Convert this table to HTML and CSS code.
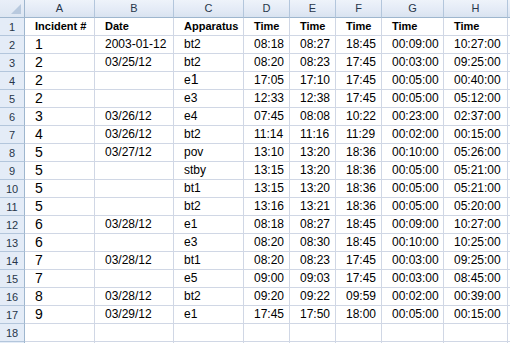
FILE: index.html
```html
<!DOCTYPE html>
<html>
<head>
<meta charset="utf-8">
<link rel="stylesheet" href="styles.css">
</head>
<body>
<div class="sheet">
  <div class="corner"><span class="tri"></span></div>
  <div class="colh">A</div><div class="colh">B</div><div class="colh">C</div><div class="colh">D</div><div class="colh">E</div><div class="colh">F</div><div class="colh">G</div><div class="colh">H</div><div class="colh"></div>

  <div class="rowh">1</div><div class="c b">Incident #</div><div class="c b">Date</div><div class="c b">Apparatus</div><div class="c b">Time</div><div class="c b">Time</div><div class="c b">Time</div><div class="c b">Time</div><div class="c b">Time</div><div class="c"></div>
  <div class="rowh">2</div><div class="c big">1</div><div class="c">2003-01-12</div><div class="c">bt2</div><div class="c">08:18</div><div class="c">08:27</div><div class="c">18:45</div><div class="c">00:09:00</div><div class="c">10:27:00</div><div class="c"></div>
  <div class="rowh">3</div><div class="c big">2</div><div class="c">03/25/12</div><div class="c">bt2</div><div class="c">08:20</div><div class="c">08:23</div><div class="c">17:45</div><div class="c">00:03:00</div><div class="c">09:25:00</div><div class="c"></div>
  <div class="rowh">4</div><div class="c big">2</div><div class="c"></div><div class="c">e<span class="bigi">1</span></div><div class="c">17:05</div><div class="c">17:10</div><div class="c">17:45</div><div class="c">00:05:00</div><div class="c">00:40:00</div><div class="c"></div>
  <div class="rowh">5</div><div class="c big">2</div><div class="c"></div><div class="c">e3</div><div class="c">12:33</div><div class="c">12:38</div><div class="c">17:45</div><div class="c">00:05:00</div><div class="c">05:12:00</div><div class="c"></div>
  <div class="rowh">6</div><div class="c big">3</div><div class="c">03/26/12</div><div class="c">e4</div><div class="c">07:45</div><div class="c">08:08</div><div class="c">10:22</div><div class="c">00:23:00</div><div class="c">02:37:00</div><div class="c"></div>
  <div class="rowh">7</div><div class="c big">4</div><div class="c">03/26/12</div><div class="c">bt2</div><div class="c">11:14</div><div class="c">11:16</div><div class="c">11:29</div><div class="c">00:02:00</div><div class="c">00:15:00</div><div class="c"></div>
  <div class="rowh">8</div><div class="c big">5</div><div class="c">03/27/12</div><div class="c">pov</div><div class="c">13:10</div><div class="c">13:20</div><div class="c">18:36</div><div class="c">00:10:00</div><div class="c">05:26:00</div><div class="c"></div>
  <div class="rowh">9</div><div class="c big">5</div><div class="c"></div><div class="c">stby</div><div class="c">13:15</div><div class="c">13:20</div><div class="c">18:36</div><div class="c">00:05:00</div><div class="c">05:21:00</div><div class="c"></div>
  <div class="rowh">10</div><div class="c big">5</div><div class="c"></div><div class="c">bt1</div><div class="c">13:15</div><div class="c">13:20</div><div class="c">18:36</div><div class="c">00:05:00</div><div class="c">05:21:00</div><div class="c"></div>
  <div class="rowh">11</div><div class="c big">5</div><div class="c"></div><div class="c">bt2</div><div class="c">13:16</div><div class="c">13:21</div><div class="c">18:36</div><div class="c">00:05:00</div><div class="c">05:20:00</div><div class="c"></div>
  <div class="rowh">12</div><div class="c big">6</div><div class="c">03/28/12</div><div class="c">e1</div><div class="c">08:18</div><div class="c">08:27</div><div class="c">18:45</div><div class="c">00:09:00</div><div class="c">10:27:00</div><div class="c"></div>
  <div class="rowh">13</div><div class="c big">6</div><div class="c"></div><div class="c">e3</div><div class="c">08:20</div><div class="c">08:30</div><div class="c">18:45</div><div class="c">00:10:00</div><div class="c">10:25:00</div><div class="c"></div>
  <div class="rowh">14</div><div class="c big">7</div><div class="c">03/28/12</div><div class="c">bt1</div><div class="c">08:20</div><div class="c">08:23</div><div class="c">17:45</div><div class="c">00:03:00</div><div class="c">09:25:00</div><div class="c"></div>
  <div class="rowh">15</div><div class="c big">7</div><div class="c"></div><div class="c">e5</div><div class="c">09:00</div><div class="c">09:03</div><div class="c">17:45</div><div class="c">00:03:00</div><div class="c">08:45:00</div><div class="c"></div>
  <div class="rowh">16</div><div class="c big">8</div><div class="c">03/28/12</div><div class="c">bt2</div><div class="c">09:20</div><div class="c">09:22</div><div class="c">09:59</div><div class="c">00:02:00</div><div class="c">00:39:00</div><div class="c"></div>
  <div class="rowh">17</div><div class="c big">9</div><div class="c">03/29/12</div><div class="c">e1</div><div class="c">17:45</div><div class="c">17:50</div><div class="c">18:00</div><div class="c">00:05:00</div><div class="c">00:15:00</div><div class="c"></div>
  <div class="rowh">18</div><div class="c"></div><div class="c"></div><div class="c"></div><div class="c"></div><div class="c"></div><div class="c"></div><div class="c"></div><div class="c"></div><div class="c"></div>
  <div class="rowh"></div><div class="c"></div><div class="c"></div><div class="c"></div><div class="c"></div><div class="c"></div><div class="c"></div><div class="c"></div><div class="c"></div><div class="c"></div>
</div>
</body>
</html>
```
FILE: styles.css
```css
html, body {
  margin: 0;
  padding: 0;
  background: #ffffff;
  overflow: hidden;
}
.sheet {
  display: grid;
  grid-template-columns: 25px 70px 79px 70px 46px 46px 46px 62px 64px 1fr;
  grid-template-rows: 18px repeat(19, 18px);
  width: 510px;
  height: 343px;
  overflow: hidden;
  font-family: "Liberation Sans", Arial, sans-serif;
  color: #000;
}
.sheet > div {
  box-sizing: border-box;
  border-right: 1px solid #d0d7e5;
  border-bottom: 1px solid #d0d7e5;
  overflow: hidden;
  white-space: nowrap;
}
.sheet > .corner {
  position: relative;
  background: linear-gradient(#e9eff8, #dde6f2);
  border-right: 1px solid #9eb6ce;
  border-bottom: 1px solid #9eb6ce;
}
.tri {
  position: absolute;
  right: 3px;
  bottom: 3px;
  width: 0;
  height: 0;
  border-left: 10px solid transparent;
  border-bottom: 10px solid #b8c9de;
}
.sheet > .colh {
  background: linear-gradient(#eef3fa 0%, #e4ebf6 55%, #d9e3f0 100%);
  border-right: 1px solid #b3c6dc;
  border-bottom: 1px solid #9eb6ce;
  text-align: center;
  font-size: 11px;
  line-height: 17px;
  color: #27364a;
}
.sheet > .rowh {
  background: #e4ecf7;
  border-right: 1px solid #9eb6ce;
  border-bottom: 1px solid #b3c6dc;
  text-align: center;
  font-size: 11px;
  line-height: 18px;
  color: #27364a;
}
.c {
  font-size: 12px;
  line-height: 17px;
  padding-left: 10px;
}
.c.b {
  font-weight: bold;
  font-size: 11px;
}
.c.big {
  font-size: 14px;
}
.bigi {
  font-size: 14px;
  line-height: 10px;
}
```
